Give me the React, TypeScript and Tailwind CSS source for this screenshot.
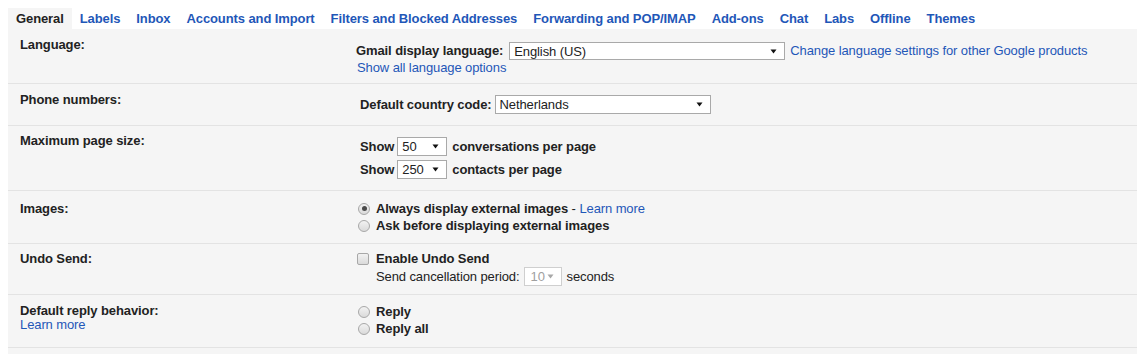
import React from 'react'

const tabs = [
  'Labels',
  'Inbox',
  'Accounts and Import',
  'Filters and Blocked Addresses',
  'Forwarding and POP/IMAP',
  'Add-ons',
  'Chat',
  'Labs',
  'Offline',
  'Themes',
]

function Arrow({ disabled }: { disabled?: boolean }) {
  return (
    <svg width="7" height="5" viewBox="0 0 7 5" className="shrink-0">
      <polygon points="0.5,0.5 6.5,0.5 3.5,4.5" fill={disabled ? '#a8a8a8' : '#111'} />
    </svg>
  )
}

function Select({
  value,
  className,
  disabled,
}: {
  value: string
  className: string
  disabled?: boolean
}) {
  return (
    <div
      className={
        'flex items-center justify-between bg-white border pl-[4px] pr-[7px] leading-[15px] ' +
        (disabled ? 'border-[#cfcfcf] text-[#a0a0a0] ' : 'border-[#a9a9a9] text-[#222] ') +
        className
      }
    >
      <span>{value}</span>
      <Arrow disabled={disabled} />
    </div>
  )
}

function Radio({ checked }: { checked?: boolean }) {
  return (
    <span className="w-[12px] h-[12px] rounded-full border border-[#a8a8a8] bg-linear-to-b from-[#f2f2f2] to-[#dadada] flex items-center justify-center shrink-0">
      {checked && <span className="w-[5px] h-[5px] rounded-full bg-[#4a4a4a]" />}
    </span>
  )
}

function Checkbox() {
  return (
    <span className="w-[12px] h-[12px] rounded-[2px] border border-[#a8a8a8] bg-linear-to-b from-[#f2f2f2] to-[#dadada] shrink-0" />
  )
}

function Row({
  label,
  labelClass,
  contentClass,
  children,
}: {
  label: React.ReactNode
  labelClass: string
  contentClass: string
  children: React.ReactNode
}) {
  return (
    <div className="flex border-b border-[#e3e3e3]">
      <div className={'w-[348px] shrink-0 pl-3 font-bold ' + labelClass}>{label}</div>
      <div className={'flex-1 ' + contentClass}>{children}</div>
    </div>
  )
}

export default function App() {
  return (
    <div className="h-[354px] w-full overflow-hidden bg-white pl-2 pt-2 flex flex-col font-['Liberation_Sans',Arial,sans-serif] text-[13px] tracking-[-0.1px] text-[#222]">
      {/* tabs */}
      <div className="flex">
        <div className="px-2 h-[21px] leading-[21px] font-bold bg-[#f5f5f5] text-[#222]">General</div>
        {tabs.map((t) => (
          <div key={t} className="px-2 h-[21px] leading-[21px] font-bold text-[#1f57b8] cursor-pointer">
            {t}
          </div>
        ))}
      </div>

      <div className="flex-1 bg-[#f5f5f5]">
        <Row label="Language:" labelClass="pt-[8px] leading-[15px]" contentClass="pt-[13px] pb-[8px]">
          <div className="flex items-center h-[18px]">
            <span className="font-bold">Gmail display language:</span>
            <Select value="English (US)" className="ml-[6px] w-[276px] h-[18px]" />
            <a className="ml-[5px] text-[#1f57b8]">Change language settings for other Google products</a>
          </div>
          <div className="leading-[15px] h-[15px] pl-[1px] text-[#1f57b8]">Show all language options</div>
        </Row>

        <Row label="Phone numbers:" labelClass="pt-[8px] leading-[15px]" contentClass="pt-[11px] pb-[11px] pl-[4px]">
          <div className="flex items-center h-[19px]">
            <span className="font-bold">Default country code:</span>
            <Select value="Netherlands" className="ml-[3px] w-[216px] h-[19px]" />
          </div>
        </Row>

        <Row label="Maximum page size:" labelClass="pt-[7px] leading-[15px]" contentClass="pt-[11px] pb-[11px] pl-[4px]">
          <div className="flex items-center h-[19px]">
            <span className="font-bold">Show</span>
            <Select value="50" className="ml-[3px] w-[50px] h-[19px]" />
            <span className="ml-[5px] font-bold">conversations per page</span>
          </div>
          <div className="flex items-center h-[19px] mt-[4px]">
            <span className="font-bold">Show</span>
            <Select value="250" className="ml-[3px] w-[50px] h-[19px]" />
            <span className="ml-[5px] font-bold">contacts per page</span>
          </div>
        </Row>

        <Row label="Images:" labelClass="pt-[10px] leading-[15px]" contentClass="pt-[9px] pb-[9px] pl-[2px]">
          <div className="flex items-center h-[17px]">
            <Radio checked />
            <span className="ml-[6px] font-bold">Always display external images</span>
            <span>&nbsp;-&nbsp;</span>
            <a className="text-[#1f57b8]">Learn more</a>
          </div>
          <div className="flex items-center h-[17px]">
            <Radio />
            <span className="ml-[6px] font-bold">Ask before displaying external images</span>
          </div>
        </Row>

        <Row label="Undo Send:" labelClass="pt-[7px] leading-[15px]" contentClass="pt-[7px] pb-[8px] pl-[1px]">
          <div className="flex items-center h-[15px]">
            <Checkbox />
            <span className="ml-[7px] font-bold">Enable Undo Send</span>
          </div>
          <div className="flex items-center h-[19px] mt-[1px] pl-[19px]">
            <span>Send cancellation period:</span>
            <Select value="10" disabled className="ml-[4px] w-[38px] h-[19px] pl-[6px]" />
            <span className="ml-[5px]">seconds</span>
          </div>
        </Row>

        <Row
          label={
            <>
              <div>Default reply behavior:</div>
              <div className="font-normal text-[#1f57b8]">Learn more</div>
            </>
          }
          labelClass="pt-[9px] leading-[14px]"
          contentClass="pt-[8px] pb-[10px] pl-[2px]"
        >
          <div className="flex items-center h-[17px]">
            <Radio />
            <span className="ml-[6px] font-bold">Reply</span>
          </div>
          <div className="flex items-center h-[17px]">
            <Radio />
            <span className="ml-[6px] font-bold">Reply all</span>
          </div>
        </Row>
      </div>
    </div>
  )
}
